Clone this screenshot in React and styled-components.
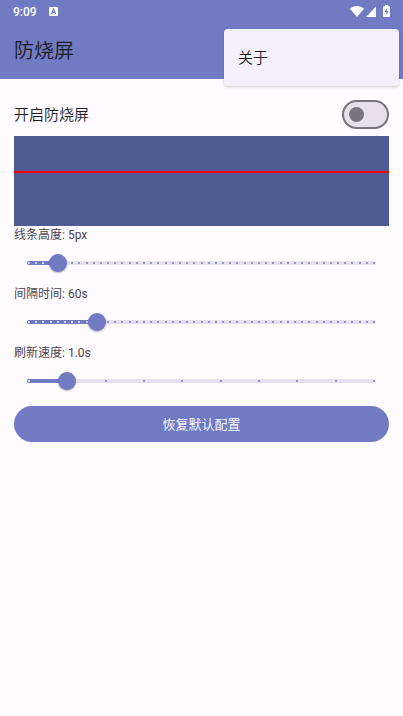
import React, { useId, useState } from 'react';
import styled, { createGlobalStyle } from 'styled-components';

const PRIMARY = '#707bc3';

const GlobalStyle = createGlobalStyle`
  *, *::before, *::after { box-sizing: border-box; }
  body {
    margin: 0;
    background: #fffbff;
    color: #1c1b1f;
    font-family: Roboto, "Noto Sans CJK SC", sans-serif;
    font-weight: 350;
  }
  button, input { font: inherit; color: inherit; margin: 0; }
`;

const Header = styled.header`
  position: relative;
  background: ${PRIMARY};
`;

const StatusBar = styled.div`
  display: flex;
  align-items: center;
  height: 22px;
  padding: 0 13px 0 13px;
  color: #fff;
`;

const Clock = styled.time`
  padding-top: 2px;
  font-size: 12px;
  line-height: 20px;
  font-weight: 500;
  margin-right: 12px;
`;

const StatusIcons = styled.div`
  display: flex;
  align-items: center;
  margin-left: auto;
`;

const Icon = styled.svg`
  display: block;
  margin-left: ${(p) => p.$gap || 0}px;
`;

const Toolbar = styled.div`
  display: flex;
  align-items: center;
  height: 57px;
  padding: 0 14px;
`;

const Title = styled.h1`
  margin: 0;
  font-size: 20px;
  line-height: 28px;
  font-weight: 350;
`;

const Menu = styled.div`
  position: absolute;
  top: 29px;
  right: 4px;
  width: 175px;
  padding: 7px 0 9px;
  border-radius: 4px;
  background: #f3f0fa;
  box-shadow: 0 1px 3px rgba(0, 0, 0, 0.2);
`;

const MenuItem = styled.button`
  display: block;
  width: 100%;
  height: 41px;
  padding: 0 14px;
  border: 0;
  background: none;
  font-size: 15px;
  text-align: left;
`;

const Main = styled.main`
  display: flex;
  flex-direction: column;
  padding: 14px;
`;

const SwitchRow = styled.div`
  display: flex;
  align-items: center;
  justify-content: space-between;
  height: 43px;
`;

const SwitchLabel = styled.label`
  font-size: 15px;
  line-height: 22px;
`;

const Switch = styled.input`
  appearance: none;
  display: flex;
  align-items: center;
  width: 47px;
  height: 29px;
  padding: 0 5px;
  border: 2px solid #79747e;
  border-radius: 15px;
  background: #e7e0ec;

  &::before {
    content: "";
    width: 15px;
    height: 15px;
    border-radius: 50%;
    background: #79747e;
  }
  &:checked {
    justify-content: flex-end;
    border-color: ${PRIMARY};
    background: ${PRIMARY};
  }
  &:checked::before { background: #fff; }
`;

const Preview = styled.div`
  height: 90px;
  padding-top: 35px;
  background: #4d5d93;
`;

const ScanLine = styled.div`
  height: 2px;
  background: #f90008;
`;

const Field = styled.div`
  display: flex;
  flex-direction: column;
  height: 59px;
`;

const FieldLabel = styled.label`
  font-size: 12px;
  line-height: 18px;
  font-weight: 400;
  color: #49454f;
`;

const SliderBox = styled.div`
  display: grid;
  align-items: center;
  height: 38px;
  padding: 0 6px;

  & > * { grid-area: 1 / 1; }
`;

const Track = styled.div`
  display: flex;
  align-items: center;
  justify-content: space-between;
  height: 4px;
  margin: 0 7px;
  padding: 0 1px;
  border-radius: 2px;
  background: linear-gradient(${PRIMARY}, ${PRIMARY}) 0 0 / ${(p) => p.$percent}% 100% no-repeat #e7e0ec;
`;

const Tick = styled.i`
  width: 2px;
  height: 2px;
  margin: 0 -1px;
  border-radius: 1px;
  background: ${(p) => (p.$active ? '#f3f0fa' : PRIMARY)};

  &:first-child { margin-left: 0; }
  &:last-child { margin-right: 0; }
`;

const Range = styled.input`
  appearance: none;
  z-index: 1;
  width: 100%;
  height: 24px;
  background: transparent;

  &::-webkit-slider-thumb {
    appearance: none;
    width: 18px;
    height: 18px;
    border-radius: 50%;
    background: ${PRIMARY};
    box-shadow: 0 1px 2px rgba(0, 0, 0, 0.3);
  }
`;

const ResetButton = styled.button`
  height: 36px;
  margin-top: 3px;
  padding: 2px 16px 0;
  border: 0;
  border-radius: 18px;
  background: ${PRIMARY};
  color: #fff;
  font-size: 13px;
  line-height: 20px;
`;

function Slider({ name, text, value, min, max, step, intervals, onChange }) {
  const id = useId();
  const ratio = (value - min) / (max - min);
  return (
    <Field>
      <FieldLabel htmlFor={id}>{name}: {text}</FieldLabel>
      <SliderBox>
        <Track $percent={ratio * 100}>
          {Array.from({ length: intervals + 1 }, (_, i) => (
            <Tick key={i} $active={i / intervals <= ratio} />
          ))}
        </Track>
        <Range
          id={id}
          type="range"
          min={min}
          max={max}
          step={step}
          value={value}
          onChange={(e) => onChange(Number(e.target.value))}
        />
      </SliderBox>
    </Field>
  );
}

const DEFAULTS = { height: 5, interval: 60, speed: 1 };

export default function App() {
  const switchId = useId();
  const [enabled, setEnabled] = useState(false);
  const [config, setConfig] = useState(DEFAULTS);
  const update = (key) => (value) => setConfig((c) => ({ ...c, [key]: value }));

  return (
    <>
      <GlobalStyle />
      <Header>
        <StatusBar>
          <Clock>9:09</Clock>
          <Icon width="9" height="9" viewBox="0 0 9 9" aria-hidden="true">
            <rect width="9" height="9" rx="1" fill="#fff" />
            <path d="M2.4 7 4.5 2 6.6 7M3.2 5.4h2.6" fill="none" stroke={PRIMARY} strokeWidth="1.2" />
          </Icon>
          <StatusIcons>
            <Icon width="14" height="11" viewBox="0 0 14 11" aria-hidden="true">
              <path d="M0 2.7C4-.9 10-.9 14 2.7L7 11Z" fill="#fff" />
            </Icon>
            <Icon $gap={2} width="10" height="11" viewBox="0 0 10 11" aria-hidden="true">
              <path d="M10 .5V11H0Z" fill="#fff" />
            </Icon>
            <Icon $gap={7} width="7" height="12" viewBox="0 0 7 12" aria-hidden="true">
              <path d="M2 0h3v1.2h1.2q.8 0 .8.8v9.2q0 .8-.8.8H.8Q0 12 0 11.2V2q0-.8.8-.8H2Z" fill="#fff" />
              <path d="M4 3 1.5 7H3.2V10L5.6 6H4Z" fill={PRIMARY} />
            </Icon>
          </StatusIcons>
        </StatusBar>
        <Toolbar>
          <Title>防烧屏</Title>
        </Toolbar>
        <Menu role="menu">
          <MenuItem role="menuitem">关于</MenuItem>
        </Menu>
      </Header>
      <Main>
        <SwitchRow>
          <SwitchLabel htmlFor={switchId}>开启防烧屏</SwitchLabel>
          <Switch
            id={switchId}
            type="checkbox"
            role="switch"
            checked={enabled}
            onChange={(e) => setEnabled(e.target.checked)}
          />
        </SwitchRow>
        <Preview>
          <ScanLine />
        </Preview>
        <Slider name="线条高度" text={`${config.height}px`} value={config.height}
          min={1} max={49} step={1} intervals={48} onChange={update('height')} />
        <Slider name="间隔时间" text={`${config.interval}s`} value={config.interval}
          min={1} max={300} step={1} intervals={48} onChange={update('interval')} />
        <Slider name="刷新速度" text={`${config.speed.toFixed(1)}s`} value={config.speed}
          min={0.5} max={5} step={0.5} intervals={9} onChange={update('speed')} />
        <ResetButton type="button" onClick={() => setConfig(DEFAULTS)}>恢复默认配置</ResetButton>
      </Main>
    </>
  );
}
